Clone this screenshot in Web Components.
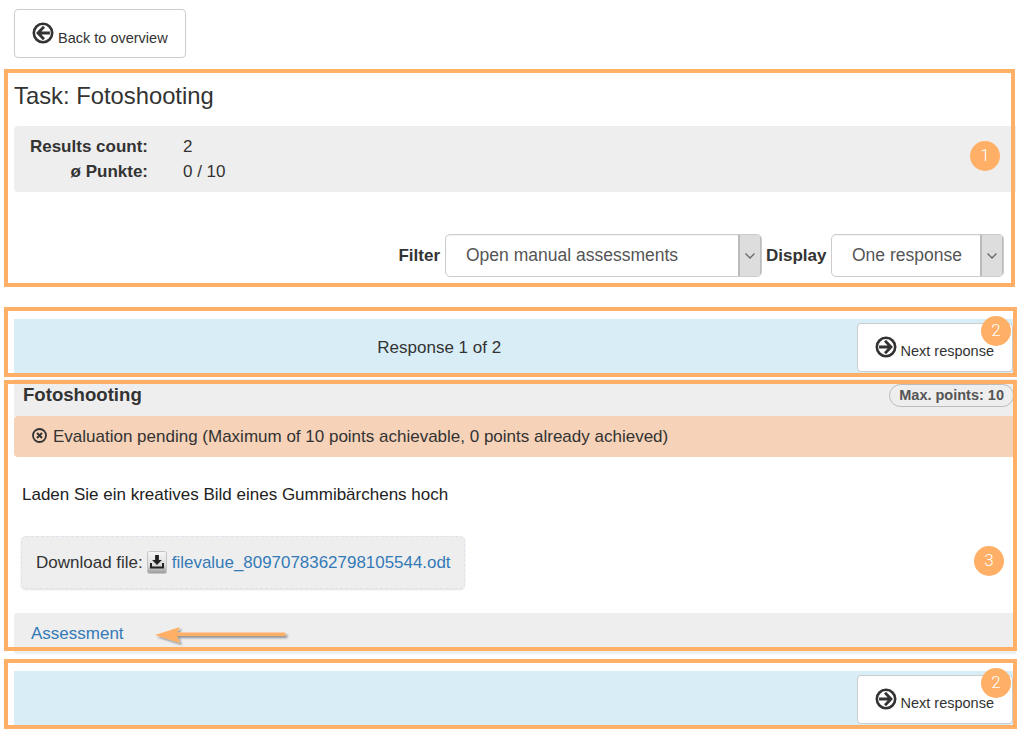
<!DOCTYPE html>
<html lang="en"><head><meta charset="utf-8"><title>Task review</title>
<style>
html,body{margin:0;padding:0;background:#fff}
body{font:17px/1.25 "Liberation Sans",Arial,sans-serif;color:#333;width:1017px;height:729px;overflow:hidden;position:relative}
</style></head><body>
<review-page>
  <icon-button dir="back" style="margin-bottom:25px">Back to overview</icon-button>
  <task-heading>Task: Fotoshooting</task-heading>
  <stats-panel>
    <span slot="k1">Results count:</span><span slot="v1">2</span>
    <span slot="k2">ø Punkte:</span><span slot="v2">0 / 10</span>
  </stats-panel>
  <filter-row>
    <field-label style="margin-right:1px">Filter</field-label><select-box width="317">Open manual assessments</select-box>
    <field-label style="min-width:61px">Display</field-label><select-box width="173">One response</select-box>
  </filter-row>
  <nav-bar style="margin-top:42px" label="Response 1 of 2"></nav-bar>
  <question-panel></question-panel>
  <nav-bar style="margin-top:17px"></nav-bar>
</review-page>
<note-frame style="left:4px;top:69px;width:1011px;height:218px"></note-frame>
<note-frame style="left:4px;top:307px;width:1013px;height:70px"></note-frame>
<note-frame style="left:4px;top:380px;width:1013px;height:271px"></note-frame>
<note-frame style="left:4px;top:659px;width:1013px;height:70px"></note-frame>
<note-badge style="left:970px;top:141px">1</note-badge>
<note-badge style="left:981px;top:316px">2</note-badge>
<note-badge style="left:974px;top:546px">3</note-badge>
<note-badge style="left:981px;top:668px">2</note-badge>
<note-arrow style="left:150px;top:620px"></note-arrow>
<script>
function def(name, css, html){
  customElements.define(name, class extends HTMLElement{
    constructor(){super();const r=this.attachShadow({mode:'open'});r.innerHTML='<style>'+css+'</style>'+(typeof html==='function'?html(this):html);}
  });
}
const circleArrow=(d)=>`<svg viewBox="0 0 22 22" width="22" height="22" aria-hidden="true"><circle cx="11" cy="11" r="9.200" fill="none" stroke="#333" stroke-width="2.600"/><path d="${d}" fill="none" stroke="#333" stroke-width="2.800" stroke-linecap="square" stroke-linejoin="miter"/></svg>`;
const BACK='M11 5.800 6 11l5 5.200M6.800 11H16.500', NEXT='M11 5.800 16 11l-5 5.200M15.200 11H5.500';

def('review-page',':host{display:block;padding:9px 1px 0 14px}','<slot></slot>');
def('icon-button',`:host{display:block;width:fit-content}
 .b{box-sizing:border-box;height:49px;background:#fff;border:1px solid #ccc;border-radius:4px;display:flex;align-items:flex-start;font-size:14.5px;color:#333;white-space:nowrap}
 svg{display:block;margin-top:12px}
 span{margin-left:4px}`,
 el=>{const back=el.getAttribute('dir')==='back';
  return `<div class="b" style="padding:0 ${back?17:18}px 0 17px">${circleArrow(back?BACK:NEXT)}<span style="margin-top:${back?19:18}px"><slot></slot></span></div>`});
def('task-heading',':host{display:block;font-size:23.8px;line-height:26px;color:#333;margin-bottom:17px}','<slot></slot>');
def('stats-panel',`:host{display:block;background:#eee;border-radius:4px 0 0 4px;height:66px;box-sizing:border-box;padding:8px 17px}
 .g{display:grid;grid-template-columns:117px auto;column-gap:35px;justify-content:start;line-height:25px}
 .k{font-weight:bold;white-space:nowrap;display:flex;justify-content:flex-end}`,
 `<div class="g"><div class="k"><slot name="k1"></slot></div><div><slot name="v1"></slot></div><div class="k"><slot name="k2"></slot></div><div><slot name="v2"></slot></div></div>`);
def('filter-row',':host{display:flex;justify-content:flex-end;align-items:center;margin-top:42px;padding-right:12px;gap:4px}','<slot></slot>');
def('field-label',':host{display:block;font-weight:bold;font-size:17px;color:#333}','<slot></slot>');
def('select-box',`:host{display:block}
 .s{box-sizing:border-box;height:43px;border:1px solid #ccc;border-radius:5px;background:#fff;display:flex;overflow:hidden;box-shadow:inset 0 1px 1px rgba(0,0,0,.05)}
 .t{flex:1;padding-left:20px;font-size:17.5px;line-height:40px;color:#555;white-space:nowrap}
 .a{width:20px;background:#ddd;border-left:2px solid #bbb;border-right:1px solid #bbb;display:flex;align-items:center;justify-content:center}`,
 el=>`<div class="s" style="width:${el.getAttribute('width')}px"><div class="t"><slot></slot></div><div class="a"><svg width="12" height="8" viewBox="0 0 12 8"><path d="M1.500 1.500 6 6l4.500-4.500" fill="none" stroke="#666" stroke-width="1.300"/></svg></div></div>`);
def('nav-bar',`:host{display:flex;box-sizing:border-box;height:56px;background:#d9edf7;padding:4px 3px 0 0;align-items:flex-start}
 .l{flex:1;text-align:center;line-height:49px;font-size:17px;color:#333;padding-left:8px}`,
 el=>`<div class="l">${el.getAttribute('label')||''}</div><icon-button dir="next">Next response</icon-button>`);
def('question-panel',`:host{display:block;margin-top:4px}
 .head{height:37px;background:#eee;display:flex;justify-content:space-between;padding:0 2px 0 9px;box-sizing:border-box}
 h3{margin:5px 0 0;font-size:18.6px;line-height:22px;font-weight:bold;color:#333}
 .pill{margin-top:5px;height:23px;box-sizing:border-box;border:1px solid #bbb;border-radius:12px;padding:0 9px;font-size:14.5px;font-weight:bold;line-height:21px;color:#555}
 .alert{height:41px;background:#f5d2b8;border-radius:4px 0 0 4px;display:flex;align-items:center;padding-left:18px;color:#333;gap:6px}
 .alert svg{display:block;margin-top:-3px}
 p{margin:28px 0 0 8px;line-height:20px;color:#222}
 .file{margin:31px 0 0 7px;width:444px;height:53px;box-sizing:border-box;background:#eee;border:1px dashed #dde3ea;border-radius:5px;box-shadow:0 1px 2px rgba(0,0,0,.12);display:flex;align-items:center;padding-left:14px;white-space:nowrap}
 .file svg{margin:0 5px 0 4px;display:block}
 .file a{font-size:16.95px}
 a{color:#337ab7;text-decoration:none}
 .foot{margin-top:24px;height:41px;background:#eee;border-radius:4px 0 0 4px;padding:11px 0 0 17px;box-sizing:border-box;line-height:20px}`,
 `<div class="head"><h3>Fotoshooting</h3><div class="pill">Max. points: 10</div></div>
 <div class="alert"><svg width="15" height="15" viewBox="0 0 15 15"><circle cx="7.500" cy="7.500" r="6.500" fill="none" stroke="#333" stroke-width="1.800"/><path d="M5 5l5 5M10 5l-5 5" stroke="#333" stroke-width="2"/></svg><span>Evaluation pending (Maximum of 10 points achievable, 0 points already achieved)</span></div>
 <p>Laden Sie ein kreatives Bild eines Gummibärchens hoch</p>
 <div class="file">Download file:<svg width="20" height="23" viewBox="0 0 20 23"><defs><linearGradient id="g" x1="0" y1="0" x2="0" y2="1"><stop offset="0" stop-color="#f6f6f6"/><stop offset=".6" stop-color="#ddd"/><stop offset="1" stop-color="#999"/></linearGradient></defs><rect x=".5" y=".5" width="19" height="22" rx="2" fill="url(#g)" stroke="#c4c4c4"/><path d="M8.100 4h3.800v5h3l-4.900 5-4.900-5h3z" fill="#222"/><path d="M3 12v5.500h14V12h-2v3.500H5V12z" fill="#222"/></svg><a href="#">filevalue_8097078362798105544.odt</a></div>
 <div class="foot"><a href="#">Assessment</a></div>`);
def('note-frame',':host{position:absolute;display:block;box-sizing:border-box;border:4px solid #ffb066;pointer-events:none}','');
def('note-badge',':host{position:absolute;display:block;width:30px;height:30px;border-radius:50%;background:#ffb066;color:#fff;font:300 17px/29px Roboto,sans-serif;text-align:center}','<slot></slot>');
def('note-arrow',':host{position:absolute;display:block;width:145px;height:30px}',
 `<svg width="145" height="30" viewBox="0 0 145 30"><defs><filter id="s" x="-10%" y="-50%" width="120%" height="200%"><feDropShadow dx="2" dy="2" stdDeviation="1.200" flood-color="#000" flood-opacity=".4"/></filter></defs><path d="M5 15 30 7 27 12.500H134a1.500 1.500 0 0 1 0 3.500H27L30 23z" fill="#ffb066" filter="url(#s)"/></svg>`);
</script>
</body></html>
